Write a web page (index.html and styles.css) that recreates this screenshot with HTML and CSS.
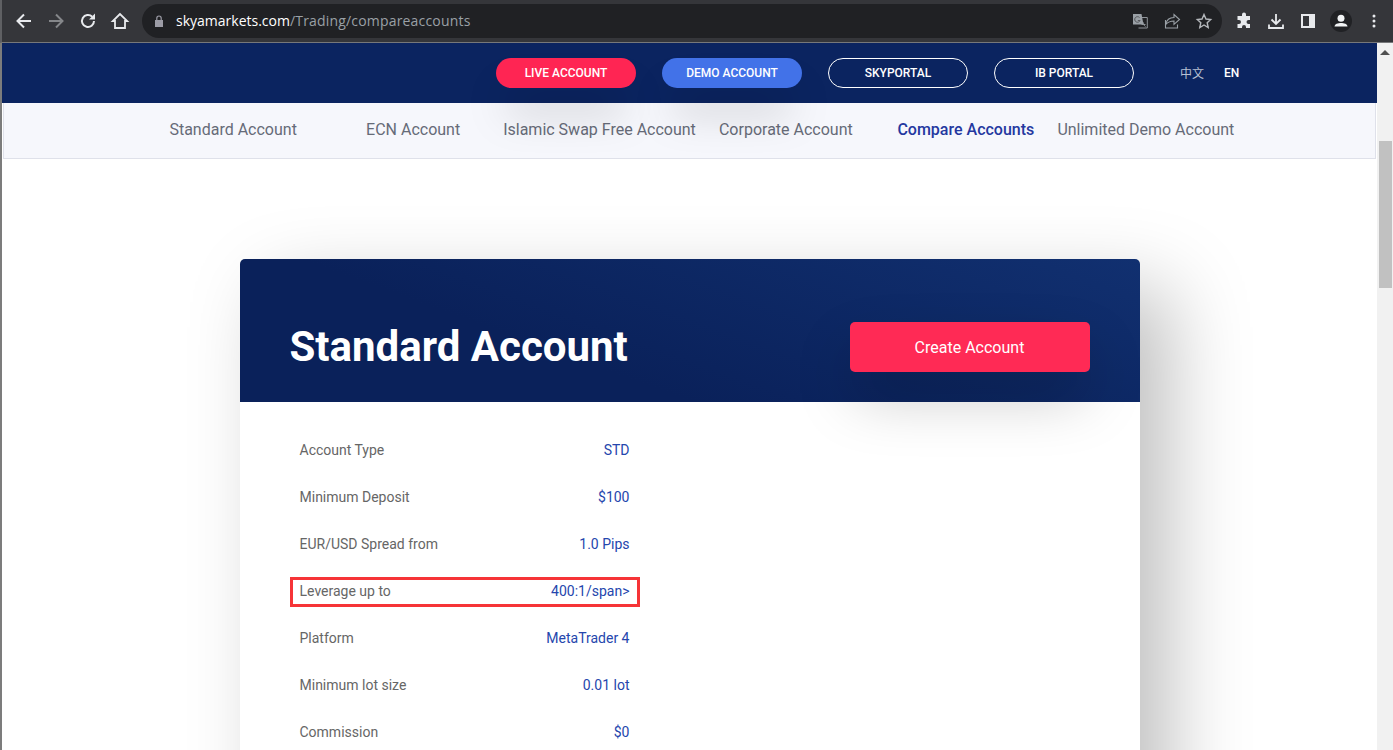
FILE: index.html
```html
<!DOCTYPE html>
<html lang="en">
<head>
    <meta charset="UTF-8">
    <meta name="viewport" content="width=device-width, initial-scale=1.0">
    <title>Compare Accounts</title>
    <link rel="stylesheet" href="styles.css">
</head>
<body>
    <!-- Browser toolbar -->
    <div class="chrome">
        <div class="chrome-nav">
            <svg class="icon" viewBox="0 0 20 20"><path d="M17 10H4M10 3.500L3.500 10l6.500 6.500" fill="none" stroke="#e8eaed" stroke-width="2"/></svg>
            <svg class="icon" viewBox="0 0 20 20"><path d="M3 10h13M10 3.500l6.500 6.500-6.500 6.500" fill="none" stroke="#85878a" stroke-width="2"/></svg>
            <svg class="icon" viewBox="0 0 20 20"><path d="M16 10a6 6 0 1 1-1.800-4.300" fill="none" stroke="#e8eaed" stroke-width="2"/><path d="M17 2.500v6h-6z" fill="#e8eaed"/></svg>
            <svg class="icon" viewBox="0 0 20 20"><path d="M10 3 2.800 10H5v7h10v-7h2.200z" fill="none" stroke="#e8eaed" stroke-width="1.800"/></svg>
        </div>
        <div class="omnibox">
            <svg class="lock" viewBox="0 0 10 12"><path d="M1 5h8v7H1z" fill="#9c9ca6"/><path d="M2.800 5V3.200a2.200 2.200 0 0 1 4.400 0V5" fill="none" stroke="#9c9ca6" stroke-width="1.200"/></svg>
            <span class="url"><span class="url-host">skyamarkets.com</span>/Trading/compareaccounts</span>
            <div class="omni-icons">
                <svg class="icon" viewBox="0 0 20 20"><path d="M10 6.500h7.300V17H8.500" fill="none" stroke="#8f9499" stroke-width="1"/><path d="M3 3h8.500l2 10.500H3z" fill="#9aa0a6"/><path d="M9.500 6.500a2.800 2.800 0 1 0 .6 3H7.800" fill="none" stroke="#55575b" stroke-width="1"/><path d="M11.500 13.500h4M13.500 11.500c0 2 .5 3 2 4" fill="none" stroke="#8f9499" stroke-width="1"/></svg>
                <svg class="icon" viewBox="0 0 20 20"><path d="M3.500 9v8h12v-3.500M3.800 13.500C4.500 9 8 6.500 12 6.500V3.500l5.500 5-5.500 4.800V10c-3 0-6 1-8.200 3.500z" fill="none" stroke="#9aa0a6" stroke-width="1.100"/></svg>
                <svg class="icon" viewBox="0 0 20 20"><path d="m10 3.500 2 4.500 4.700.5-3.500 3.200 1 4.800-4.200-2.500-4.200 2.500 1-4.800-3.500-3.200L8 8z" fill="none" stroke="#b4b7bb" stroke-width="1.400"/></svg>
            </div>
        </div>
        <div class="chrome-tools">
            <svg class="icon" viewBox="0 0 20 20"><path d="M8 3.500a2 2 0 0 1 4 0V5h4v4h-1.500a2 2 0 0 0 0 4H16v4h-4v-1a2 2 0 0 0-4 0v1H3.500v-4H5a2 2 0 0 0 0-4H3.500V5H8z" fill="#e8eaed"/></svg>
            <svg class="icon" viewBox="0 0 20 20"><path d="M10 3v9.500M5.500 8.500l4.500 4.500 4.500-4.500M3 13.500V17h14v-3.500" fill="none" stroke="#e8eaed" stroke-width="1.800"/></svg>
            <svg class="icon" viewBox="0 0 20 20"><path d="M4 4h12v12H4z" fill="none" stroke="#e8eaed" stroke-width="2"/><path d="M11 4h5v12h-5z" fill="#e8eaed"/></svg>
            <span class="avatar"><svg viewBox="0 0 22 22"><circle cx="11" cy="8.200" r="3.500" fill="#f1f3f4"/><path d="M4.500 16.500c0-2.500 3.500-3.500 6.500-3.500s6.500 1 6.500 3.500z" fill="#f1f3f4"/></svg></span>
            <svg class="icon" viewBox="0 0 20 20"><circle cx="10" cy="5" r="1.500" fill="#e8eaed"/><circle cx="10" cy="10" r="1.500" fill="#e8eaed"/><circle cx="10" cy="15" r="1.500" fill="#e8eaed"/></svg>
        </div>
    </div>

    <div class="viewport">
        <div class="page">
            <header class="topbar">
                <a class="pill pill-live">LIVE ACCOUNT</a>
                <a class="pill pill-demo">DEMO ACCOUNT</a>
                <a class="pill pill-line">SKYPORTAL</a>
                <a class="pill pill-line">IB PORTAL</a>
                <div class="lang">
                    <span class="lang-zh">中文</span>
                    <span class="lang-en">EN</span>
                </div>
            </header>

            <nav class="subnav">
                <a>Standard Account</a>
                <a>ECN Account</a>
                <a>Islamic Swap Free Account</a>
                <a>Corporate Account</a>
                <a class="active">Compare Accounts</a>
                <a>Unlimited Demo Account</a>
            </nav>

            <section class="card">
                <div class="card-head">
                    <h1>Standard Account</h1>
                    <a class="btn-create">Create Account</a>
                </div>
                <ul class="specs">
                    <li><span>Account Type</span><b>STD</b></li>
                    <li><span>Minimum Deposit</span><b>$100</b></li>
                    <li><span>EUR/USD Spread from</span><b>1.0 Pips</b></li>
                    <li class="marked"><span>Leverage up to</span><b>400:1/span&gt;</b></li>
                    <li><span>Platform</span><b>MetaTrader 4</b></li>
                    <li><span>Minimum lot size</span><b>0.01 lot</b></li>
                    <li><span>Commission</span><b>$0</b></li>
                </ul>
            </section>
        </div>

        <div class="scrollbar">
            <div class="scroll-up"></div>
            <div class="scroll-thumb"></div>
        </div>
    </div>
</body>
</html>
```

FILE: styles.css
```css
* {
    box-sizing: border-box;
}

html, body {
    height: 100%;
    margin: 0;
    overflow: hidden;
}

body {
    font-family: Roboto, Arial, sans-serif;
    background: #fff;
}

/* browser toolbar */
.chrome {
    display: flex;
    align-items: center;
    height: 43px;
    padding-left: 2px;
    background: #35363a;
    border-left: 2px solid #5f6063;
    border-bottom: 1px solid #77787a;
}

.chrome-nav {
    display: flex;
    gap: 12px;
    padding-left: 10px;
    margin-right: 12px;
}

.icon {
    display: block;
    width: 20px;
    height: 20px;
    flex: none;
}

.omnibox {
    display: flex;
    align-items: center;
    width: 1080px;
    height: 34px;
    padding: 0 8px 0 12px;
    background: #202124;
    border-radius: 17px;
}

.lock {
    width: 10px;
    height: 12px;
    margin-right: 12px;
}

.url {
    padding-bottom: 2px;
    font-family: "Open Sans", Arial, sans-serif;
    font-size: 14px;
    letter-spacing: 0.18px;
    color: #9aa0a6;
}

.url-host {
    letter-spacing: 0;
    color: #fff;
}

.omni-icons {
    display: flex;
    gap: 12px;
    margin-left: auto;
}

.chrome-tools {
    display: flex;
    align-items: center;
    gap: 12px;
    margin-left: 12px;
}

.avatar {
    display: block;
    width: 22px;
    height: 22px;
    background: #202124;
    border-radius: 50%;
}

.avatar svg {
    display: block;
}

/* page area */
.viewport {
    display: flex;
    height: 707px;
    border-left: 2px solid #7c7c7c;
}

.page {
    position: relative;
    flex: 1;
    min-width: 0;
    background: #fff;
}

.topbar {
    position: relative;
    z-index: 2;
    display: flex;
    align-items: center;
    gap: 26px;
    height: 60px;
    padding: 0 0 0 494px;
    background: #0b2460;
}

.pill {
    display: block;
    width: 140px;
    height: 30px;
    font-size: 12px;
    font-weight: 500;
    line-height: 30px;
    text-align: center;
    color: #fff;
    border-radius: 15px;
}

.pill-live {
    background: #ff2553;
    box-shadow: 0 30px 40px -10px rgba(0, 0, 0, 0.35);
}

.pill-demo {
    background: #4272e8;
    box-shadow: 0 30px 40px -10px rgba(0, 0, 0, 0.35);
}

.pill-line {
    line-height: 28px;
    border: 1px solid #fff;
}

.lang {
    display: flex;
    gap: 20px;
    margin-left: 20px;
    font-size: 12px;
    line-height: 16px;
}

.lang-zh {
    display: block;
    height: 16px;
    color: #b9c0d2;
    font-family: "Noto Sans CJK SC", Roboto, sans-serif;
}

.lang-en {
    display: block;
    height: 16px;
    color: #fff;
    font-weight: 500;
}

.subnav {
    display: flex;
    justify-content: center;
    height: 56px;
    margin: 0 1px;
    background: #f6f7fc;
    border-left: 1px solid #dfe1ea;
    border-right: 1px solid #dfe1ea;
    border-bottom: 1px solid #dfe1ea;
}

.subnav a {
    min-width: 180px;
    font-size: 16px;
    line-height: 53px;
    text-align: center;
    color: #666b78;
}

.subnav .active {
    font-weight: 500;
    color: #2438a0;
}

.card {
    width: 900px;
    margin: 100px auto 0;
    padding-bottom: 120px;
    background: #fff;
    border-radius: 5px;
    box-shadow: 30px 30px 80px rgba(0, 0, 0, 0.25);
}

.card-head {
    display: flex;
    align-items: center;
    justify-content: space-between;
    height: 143px;
    padding: 32px 50px 0;
    background: linear-gradient(20deg, #0a215a 35%, #113070 100%);
    border-radius: 5px 5px 0 0;
}

.card-head h1 {
    margin: 0;
    font-size: 42px;
    font-weight: 700;
    color: #fff;
}

.btn-create {
    display: block;
    width: 240px;
    height: 50px;
    font-size: 16px;
    font-weight: 400;
    line-height: 52px;
    text-align: center;
    color: #fff;
    background: #ff2a55;
    border-radius: 5px;
    box-shadow: 0 28px 60px -6px rgba(0, 0, 0, 0.26);
}

.specs {
    width: 330px;
    margin: 25px 0 0 60px;
    padding: 0;
    list-style: none;
}

.specs li {
    display: flex;
    justify-content: space-between;
    height: 47px;
    font-size: 14px;
    line-height: 47px;
    color: #666;
}

.specs b {
    font-weight: 400;
    color: #2546ad;
}

.marked {
    position: relative;
}

.marked::after {
    content: "";
    position: absolute;
    top: 9px;
    bottom: 8px;
    left: -10px;
    right: -10px;
    border: 3px solid #f63437;
}

.scrollbar {
    position: relative;
    flex: none;
    width: 16px;
    background: #f1f1f1;
}

.scroll-up {
    width: 0;
    margin: 7px auto 0;
    border-left: 5px solid transparent;
    border-right: 5px solid transparent;
    border-bottom: 5px solid #505050;
}

.scroll-thumb {
    position: absolute;
    top: 98px;
    left: 2px;
    right: 1px;
    height: 147px;
    background: #c1c1c1;
}
```
